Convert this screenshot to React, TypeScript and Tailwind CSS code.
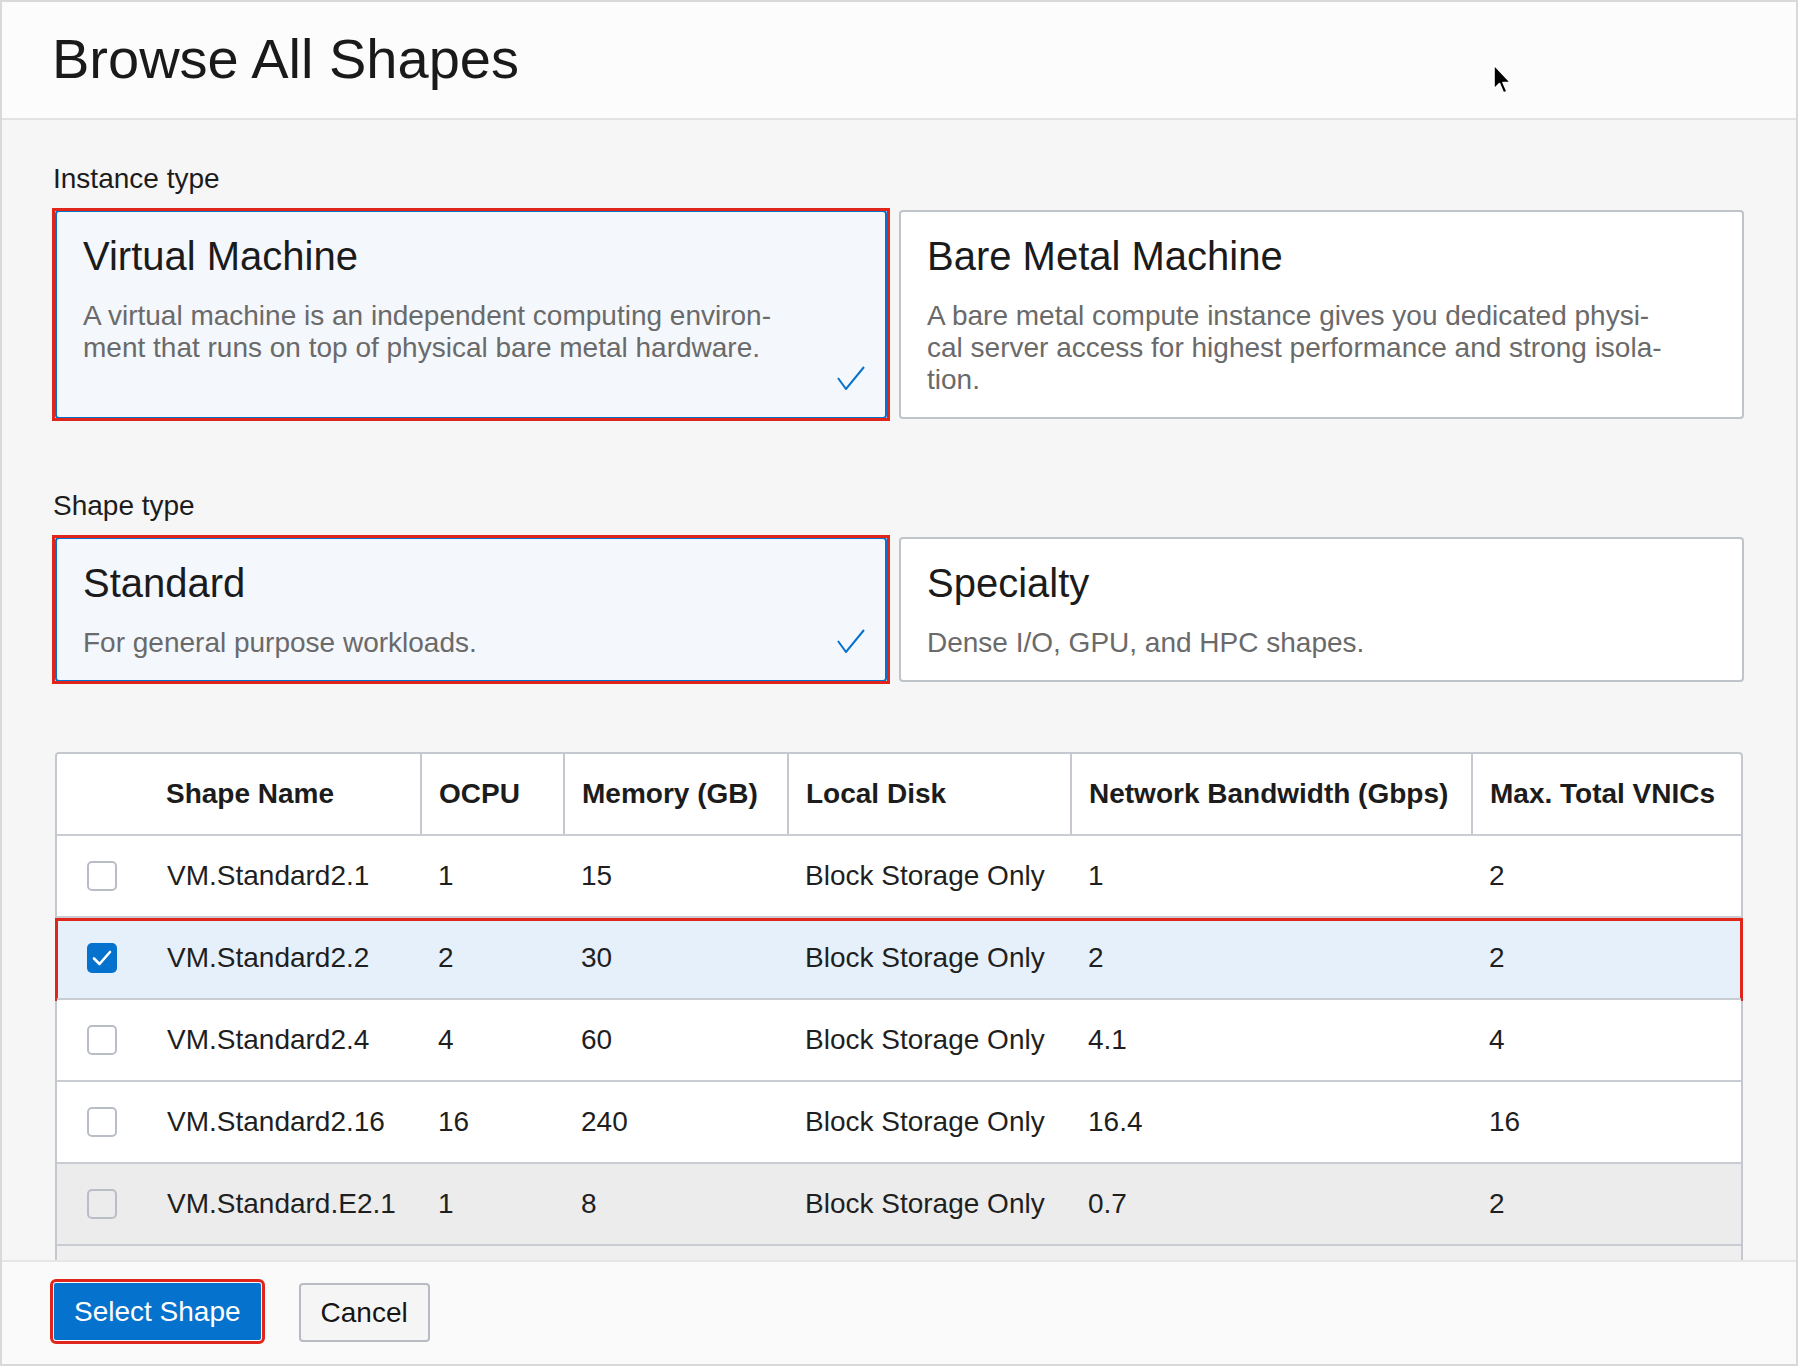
import React from "react";

type Shape = {
  name: string;
  ocpu: string;
  memory: string;
  disk: string;
  bandwidth: string;
  vnics: string;
};

const SHAPES: Shape[] = [
  { name: "VM.Standard2.1", ocpu: "1", memory: "15", disk: "Block Storage Only", bandwidth: "1", vnics: "2" },
  { name: "VM.Standard2.2", ocpu: "2", memory: "30", disk: "Block Storage Only", bandwidth: "2", vnics: "2" },
  { name: "VM.Standard2.4", ocpu: "4", memory: "60", disk: "Block Storage Only", bandwidth: "4.1", vnics: "4" },
  { name: "VM.Standard2.16", ocpu: "16", memory: "240", disk: "Block Storage Only", bandwidth: "16.4", vnics: "16" },
  { name: "VM.Standard.E2.1", ocpu: "1", memory: "8", disk: "Block Storage Only", bandwidth: "0.7", vnics: "2" },
];

const COLS = "grid grid-cols-[90px_273px_143px_224px_283px_401px_1fr]";

function CardCheck() {
  return (
    <svg
      className="absolute right-[20px] bottom-[27px]"
      width="28"
      height="24"
      viewBox="0 0 28 24"
      fill="none"
    >
      <polyline points="1,12 9,23 27,1" stroke="#0572ce" strokeWidth="2" />
    </svg>
  );
}

function OptionCard({
  title,
  lines,
  selected,
}: {
  title: string;
  lines: string[];
  selected?: boolean;
}) {
  return (
    <div
      className={`relative rounded-[4px] border-2 pl-[26px] pr-[40px] pt-[20px] pb-[21px] ${
        selected ? "bg-[#f4f7fc] border-[#0572ce]" : "bg-white border-[#bfc4cb]"
      }`}
    >
      <div className="text-[40px] leading-[48px] text-[#1b1b1b]">{title}</div>
      <p className="mt-[20px] text-[28px] leading-[32px] text-[#6a6a6a] whitespace-nowrap">
        {lines.map((l) => (
          <span key={l} className="block">
            {l}
          </span>
        ))}
      </p>
      {selected && (
        <>
          <CardCheck />
          {/* red highlight frame */}
          <span className="absolute -left-[5px] -right-[5px] -top-[4px] -bottom-[4px] border-[3px] border-[#e0261b] pointer-events-none" />
        </>
      )}
    </div>
  );
}

function Checkbox({ checked }: { checked?: boolean }) {
  if (checked) {
    return (
      <div className="w-[30px] h-[30px] rounded-[5px] bg-[#0572ce] flex items-center justify-center">
        <svg width="20" height="16" viewBox="0 0 20 16" fill="none">
          <polyline
            points="2,8.5 7.5,14 18,2"
            stroke="white"
            strokeWidth="2.6"
            strokeLinecap="round"
            strokeLinejoin="round"
          />
        </svg>
      </div>
    );
  }
  return <div className="w-[30px] h-[30px] rounded-[5px] border-2 border-[#b9bec6]" />;
}

function Cursor() {
  return (
    <svg
      className="absolute left-[1490px] top-[61px]"
      width="22"
      height="34"
      viewBox="0 0 22 34"
    >
      <path
        d="M2 2 L2 26 L7.5 20.5 L11.5 30 L15 28.5 L11 19.5 L18.5 19.5 Z"
        fill="#000"
        stroke="#fff"
        strokeWidth="1.6"
        strokeLinejoin="round"
      />
    </svg>
  );
}

export default function App() {
  return (
    <div className="w-[1798px] h-[1366px] border-2 border-[#d9d9d9] flex flex-col bg-[#f6f6f6] overflow-hidden font-['Liberation_Sans',Arial,sans-serif] text-[#1c1c1c]">
      {/* Header */}
      <div className="relative h-[118px] shrink-0 bg-[#fcfcfc] border-b-2 border-[#e3e3e3] pl-[50px] pt-[25px]">
        <h1 className="text-[56px] leading-[64px] text-[#1a1a1a]">Browse All Shapes</h1>
        <Cursor />
      </div>

      {/* Body */}
      <div className="flex-1 overflow-hidden pl-[48px] pr-[52px] pt-[43px]">
        <div className="pl-[3px] text-[28px] leading-[32px] text-[#1c1c1c]">Instance type</div>
        <div className="mt-[15px] ml-[5px] grid grid-cols-[832px_1fr] gap-x-[12px]">
          <OptionCard
            selected
            title="Virtual Machine"
            lines={[
              "A virtual machine is an independent computing environ-",
              "ment that runs on top of physical bare metal hardware.",
            ]}
          />
          <OptionCard
            title="Bare Metal Machine"
            lines={[
              "A bare metal compute instance gives you dedicated physi-",
              "cal server access for highest performance and strong isola-",
              "tion.",
            ]}
          />
        </div>

        <div className="mt-[71px] pl-[3px] text-[28px] leading-[32px] text-[#1c1c1c]">Shape type</div>
        <div className="mt-[15px] ml-[5px] grid grid-cols-[832px_1fr] gap-x-[12px]">
          <OptionCard selected title="Standard" lines={["For general purpose workloads."]} />
          <OptionCard title="Specialty" lines={["Dense I/O, GPU, and HPC shapes."]} />
        </div>

        {/* Shapes table */}
        <div className="mt-[70px] ml-[5px] mr-[1px] border-2 border-b-0 border-[#c5c9cf] rounded-t-[4px] bg-white">
          <div className={`${COLS} h-[80px] items-stretch text-[28px] font-bold text-[#1c1c1c]`}>
            <div />
            <div className="flex items-center pl-[19px]">Shape Name</div>
            <div className="flex items-center pl-[17px] border-l-2 border-[#c5c9cf]">OCPU</div>
            <div className="flex items-center pl-[17px] border-l-2 border-[#c5c9cf]">Memory (GB)</div>
            <div className="flex items-center pl-[17px] border-l-2 border-[#c5c9cf]">Local Disk</div>
            <div className="flex items-center pl-[17px] border-l-2 border-[#c5c9cf]">Network Bandwidth (Gbps)</div>
            <div className="flex items-center pl-[17px] border-l-2 border-[#c5c9cf]">Max. Total VNICs</div>
          </div>
          {SHAPES.map((s, i) => {
            const selected = i === 1;
            const bg = selected ? "bg-[#e6f0fa]" : i >= 4 ? "bg-[#ececec]" : "bg-white";
            return (
              <div
                key={s.name}
                className={`${COLS} relative h-[82px] border-t-2 border-[#c9cdd3] items-center text-[28px] text-[#1f1f1f] ${bg}`}
              >
                <div className="pl-[30px]">
                  <Checkbox checked={selected} />
                </div>
                <div className="pl-[20px]">{s.name}</div>
                <div className="pl-[18px]">{s.ocpu}</div>
                <div className="pl-[18px]">{s.memory}</div>
                <div className="pl-[18px]">{s.disk}</div>
                <div className="pl-[18px]">{s.bandwidth}</div>
                <div className="pl-[18px]">{s.vnics}</div>
                {selected && (
                  <span className="absolute -left-[2px] -right-[2px] top-0 -bottom-[3px] border-[3px] border-[#e0261b] pointer-events-none" />
                )}
              </div>
            );
          })}
          {/* next row, scrolled below the footer */}
          <div className="h-[82px] border-t-2 border-[#c9cdd3] bg-[#efefef]" />
        </div>
      </div>

      {/* Footer */}
      <div className="h-[104px] shrink-0 bg-[#fafafa] border-t-2 border-[#e6e6e6] pl-[52px] pt-[21px] flex items-start gap-[38px]">
        <button className="h-[57px] px-[20px] bg-[#0572ce] text-white text-[28px] rounded-[2px] outline-[3px] outline-solid outline-[#e0261b] outline-offset-[1px]">
          Select Shape
        </button>
        <button className="h-[59px] px-[20px] bg-[#f5f5f5] border-2 border-[#b8bcc2] rounded-[4px] text-[28px] text-[#161513]">
          Cancel
        </button>
      </div>
    </div>
  );
}
